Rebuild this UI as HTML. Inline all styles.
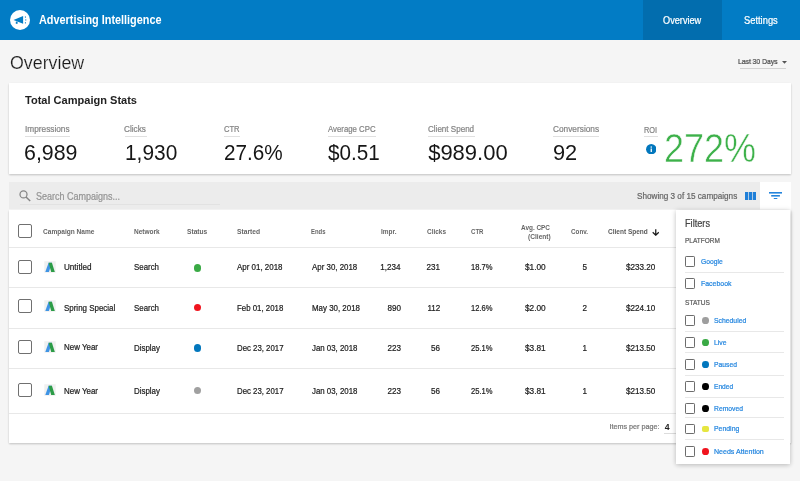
<!DOCTYPE html>
<html><head><meta charset="utf-8">
<style>
*{box-sizing:border-box;margin:0;padding:0}
html,body{width:800px;height:481px;overflow:hidden;background:#f5f5f5;font-family:"Liberation Sans",sans-serif;color:#212121}
.a{position:absolute;white-space:nowrap;line-height:1}
.cb{width:14px;height:13.6px;border:1.7px solid #707070;border-radius:2px;background:#fff}
.cbs{width:10.8px;height:10.6px;border:1.15px solid #6c6c6c;border-radius:1.2px;background:#fff}
.hl{height:1px;background:#e8e8e8}
</style></head><body><div id="w" style="position:absolute;left:0;top:0;width:800px;height:481px;will-change:transform;opacity:0.999">
<div class="a" style="left:0;top:0;width:800px;height:40px;background:#027cc5"></div>
<div class="a" style="left:643px;top:0;width:79px;height:40px;background:#026dae"></div>
<svg class="a" style="left:9.55px;top:10px" width="20" height="20" viewBox="0 0 20 20"><circle cx="10" cy="10" r="10" fill="#fff"/><path d="M3.5 10 L13.1 6.1 L13.1 13.8 Z" fill="#027cc5"/><rect x="5.8" y="11.6" width="1.8" height="2.2" fill="#027cc5"/><rect x="14.9" y="6.5" width="1.1" height="1.1" fill="#027cc5"/><rect x="15.2" y="9.4" width="1.1" height="1.1" fill="#027cc5"/><rect x="14.9" y="12.3" width="1.1" height="1.1" fill="#027cc5"/></svg>
<!-- last 30 days underline + arrow -->
<div class="a" style="left:740px;top:68px;width:46px;height:1px;background:#d2d2d2"></div>
<svg class="a" style="left:782.3px;top:61.3px" width="5" height="3" viewBox="0 0 5 3"><path d="M0 0 L5 0 L2.5 2.8 Z" fill="#555"/></svg>
<!-- stats card -->
<div class="a" style="left:9px;top:83px;width:781.5px;height:90.5px;background:#fff;box-shadow:0 1px 2px rgba(0,0,0,.22)"></div>
<div class="a" style="left:25.0px;top:136.3px;width:45px;border-top:1px solid #e0e0e0"></div>
<div class="a" style="left:124.5px;top:136.3px;width:22.25px;border-top:1px solid #e0e0e0"></div>
<div class="a" style="left:223.75px;top:136.3px;width:16px;border-top:1px solid #e0e0e0"></div>
<div class="a" style="left:328.25px;top:136.3px;width:48px;border-top:1px solid #e0e0e0"></div>
<div class="a" style="left:428.25px;top:136.3px;width:46.5px;border-top:1px solid #e0e0e0"></div>
<div class="a" style="left:552.75px;top:136.3px;width:46.5px;border-top:1px solid #e0e0e0"></div>
<div class="a" style="left:644.0px;top:136.3px;width:13.5px;border-top:1px solid #e0e0e0"></div>
<svg class="a" style="left:645.5px;top:143.8px" width="10.5" height="10.5" viewBox="0 0 10.5 10.5"><circle cx="5.25" cy="5.25" r="5.2" fill="#0277bd"/><rect x="4.6" y="4.5" width="1.3" height="3.5" fill="#fff"/><rect x="4.6" y="2.4" width="1.3" height="1.3" fill="#fff"/></svg>
<!-- search bar -->
<div class="a" style="left:9px;top:182.3px;width:751px;height:27.2px;background:#ececec"></div>
<div class="a" style="left:760px;top:182px;width:30.5px;height:27.5px;background:#fff"></div>
<svg class="a" style="left:19.2px;top:189.7px" width="12" height="12" viewBox="0 0 12 12"><circle cx="4.5" cy="4.4" r="3.5" fill="none" stroke="#858585" stroke-width="1.25"/><path d="M7 6.9 L11.2 11.1" stroke="#858585" stroke-width="1.45"/></svg>
<div class="a" style="left:20px;top:203.6px;width:200px;height:1px;background:#e2e2e2"></div>
<svg class="a" style="left:744.9px;top:191.8px" width="11.3" height="8.1" viewBox="0 0 11.3 8.1"><rect x="0" y="0" width="3.3" height="8.1" fill="#1f7fd8"/><rect x="4" y="0" width="3.3" height="8.1" fill="#1f7fd8"/><rect x="8" y="0" width="3.3" height="8.1" fill="#1f7fd8"/></svg>
<svg class="a" style="left:768.9px;top:191.8px" width="13.1" height="7.6" viewBox="0 0 13.1 7.6"><rect x="0" y="0" width="13.1" height="1.6" fill="#2384dc"/><rect x="2.2" y="3" width="8.7" height="1.6" fill="#2384dc"/><rect x="4.8" y="6" width="3.5" height="1.5" fill="#2384dc"/></svg>
<!-- table -->
<div class="a" style="left:9px;top:209.5px;width:781.5px;height:233.5px;background:#fff;box-shadow:0 1px 2px rgba(0,0,0,.22)"></div>
<div class="a hl" style="left:9px;top:246.7px;width:781px"></div>
<div class="a hl" style="left:9px;top:286.5px;width:781px"></div>
<div class="a hl" style="left:9px;top:327.9px;width:781px"></div>
<div class="a hl" style="left:9px;top:368px;width:781px"></div>
<div class="a hl" style="left:9px;top:412.9px;width:781px"></div>
<div class="a cb" style="left:18px;top:224.3px"></div>
<svg class="a" style="left:651.5px;top:228.8px" width="7.5" height="7" viewBox="0 0 7.5 7"><path d="M3.75 0.2 V6 M0.7 3.2 L3.75 6.2 L6.8 3.2" fill="none" stroke="#1a1a1a" stroke-width="1.25"/></svg>
<div class="a cb" style="left:18px;top:260.3px"></div>
<svg class="a" style="left:44px;top:261.1px" width="12" height="12" viewBox="0 0 12 12"><rect x="0.3" y="0.2" width="11.4" height="11.6" fill="#f0f0f0"/><path d="M4.6 1.7 L7.9 1.7 L4.9 11 L1.3 11 Z" fill="#3f94e4"/><path d="M4.6 1.7 L7.9 1.7 L10.8 11 L7.2 11 Z" fill="#2c9c47"/></svg>
<div class="a" style="left:193.9px;top:264.45px;width:7.3px;height:7.3px;border-radius:50%;background:#3aaa45"></div>
<div class="a cb" style="left:18px;top:299.2px"></div>
<svg class="a" style="left:44px;top:300.0px" width="12" height="12" viewBox="0 0 12 12"><rect x="0.3" y="0.2" width="11.4" height="11.6" fill="#f0f0f0"/><path d="M4.6 1.7 L7.9 1.7 L4.9 11 L1.3 11 Z" fill="#3f94e4"/><path d="M4.6 1.7 L7.9 1.7 L10.8 11 L7.2 11 Z" fill="#2c9c47"/></svg>
<div class="a" style="left:193.9px;top:303.55px;width:7.3px;height:7.3px;border-radius:50%;background:#f0141e"></div>
<div class="a cb" style="left:18px;top:340.3px"></div>
<svg class="a" style="left:44px;top:341.1px" width="12" height="12" viewBox="0 0 12 12"><rect x="0.3" y="0.2" width="11.4" height="11.6" fill="#f0f0f0"/><path d="M4.6 1.7 L7.9 1.7 L4.9 11 L1.3 11 Z" fill="#3f94e4"/><path d="M4.6 1.7 L7.9 1.7 L10.8 11 L7.2 11 Z" fill="#2c9c47"/></svg>
<div class="a" style="left:193.9px;top:344.45px;width:7.3px;height:7.3px;border-radius:50%;background:#0277bd"></div>
<div class="a cb" style="left:18px;top:383.4px"></div>
<svg class="a" style="left:44px;top:384.2px" width="12" height="12" viewBox="0 0 12 12"><rect x="0.3" y="0.2" width="11.4" height="11.6" fill="#f0f0f0"/><path d="M4.6 1.7 L7.9 1.7 L4.9 11 L1.3 11 Z" fill="#3f94e4"/><path d="M4.6 1.7 L7.9 1.7 L10.8 11 L7.2 11 Z" fill="#2c9c47"/></svg>
<div class="a" style="left:193.9px;top:386.75px;width:7.3px;height:7.3px;border-radius:50%;background:#a0a0a0"></div>
<div class="a" style="top:14.22px;font-size:12px;color:#fff;font-weight:bold;left:38.9px;transform:scaleX(0.9049);transform-origin:0 0;">Advertising Intelligence</div>
<div class="a" style="top:16.08px;font-size:10px;color:#fff;left:663px;transform:scaleX(0.9175);transform-origin:0 0;-webkit-text-stroke:0.22px #fff;">Overview</div>
<div class="a" style="top:16.08px;font-size:10px;color:#fff;left:744.25px;transform:scaleX(0.9339);transform-origin:0 0;-webkit-text-stroke:0.22px #fff;">Settings</div>
<div class="a" style="top:54.29px;font-size:18.9px;color:#1a1a1a;left:9.8px;transform:scaleX(0.9424);transform-origin:0 0;-webkit-text-stroke:0.2px #f5f5f5;">Overview</div>
<div class="a" style="top:58.34px;font-size:8px;color:#444;left:737.5px;transform:scaleX(0.8458);transform-origin:0 0;-webkit-text-stroke:0.22px #444;">Last 30 Days</div>
<div class="a" style="top:94.91px;font-size:11.4px;color:#222;font-weight:bold;left:24.8px;transform:scaleX(0.9688);transform-origin:0 0;">Total Campaign Stats</div>
<div class="a" style="top:125.05px;font-size:8.6px;color:#858585;left:24.9px;transform:scaleX(0.9627);transform-origin:0 0;-webkit-text-stroke:0.22px #858585;">Impressions</div>
<div class="a" style="top:125.05px;font-size:8.6px;color:#858585;left:124.4px;transform:scaleX(0.9532);transform-origin:0 0;-webkit-text-stroke:0.22px #858585;">Clicks</div>
<div class="a" style="top:125.05px;font-size:8.6px;color:#858585;left:223.65px;transform:scaleX(0.8828);transform-origin:0 0;-webkit-text-stroke:0.22px #858585;">CTR</div>
<div class="a" style="top:125.05px;font-size:8.6px;color:#858585;left:328.15px;transform:scaleX(0.9086);transform-origin:0 0;-webkit-text-stroke:0.22px #858585;">Average CPC</div>
<div class="a" style="top:125.05px;font-size:8.6px;color:#858585;left:428.15px;transform:scaleX(0.9366);transform-origin:0 0;-webkit-text-stroke:0.22px #858585;">Client Spend</div>
<div class="a" style="top:125.05px;font-size:8.6px;color:#858585;left:552.65px;transform:scaleX(0.9651);transform-origin:0 0;-webkit-text-stroke:0.22px #858585;">Conversions</div>
<div class="a" style="top:125.65px;font-size:8.6px;color:#858585;left:643.9px;transform:scaleX(0.8573);transform-origin:0 0;-webkit-text-stroke:0.22px #858585;">ROI</div>
<div class="a" style="top:141.90px;font-size:22px;color:#161616;left:24.4px;transform:scaleX(0.9716);transform-origin:0 0;">6,989</div>
<div class="a" style="top:141.90px;font-size:22px;color:#161616;left:125.15px;transform:scaleX(0.9489);transform-origin:0 0;">1,930</div>
<div class="a" style="top:141.90px;font-size:22px;color:#161616;left:223.65px;transform:scaleX(0.9416);transform-origin:0 0;">27.6%</div>
<div class="a" style="top:141.90px;font-size:22px;color:#161616;left:328.15px;transform:scaleX(0.9398);transform-origin:0 0;">$0.51</div>
<div class="a" style="top:141.90px;font-size:22px;color:#161616;left:428.15px;">$989.00</div>
<div class="a" style="top:141.90px;font-size:22px;color:#161616;left:553.15px;transform:scaleX(0.9904);transform-origin:0 0;">92</div>
<div class="a" style="top:127.92px;font-size:40px;color:#3db14a;left:663.8px;transform:scaleX(0.8992);transform-origin:0 0;-webkit-text-stroke:0.5px #fff;">272%</div>
<div class="a" style="top:191.68px;font-size:10px;color:#949494;left:36.1px;transform:scaleX(0.8994);transform-origin:0 0;-webkit-text-stroke:0.22px #949494;">Search Campaigns...</div>
<div class="a" style="top:192.10px;font-size:8.6px;color:#666;left:636.75px;transform:scaleX(0.9494);transform-origin:0 0;-webkit-text-stroke:0.22px #666;">Showing 3 of 15 campaigns</div>
<div class="a" style="top:227.98px;font-size:7.3px;color:#666;font-weight:bold;left:43px;transform:scaleX(0.9005);transform-origin:0 0;">Campaign Name</div>
<div class="a" style="top:227.98px;font-size:7.3px;color:#666;font-weight:bold;left:134.25px;transform:scaleX(0.8942);transform-origin:0 0;">Network</div>
<div class="a" style="top:227.98px;font-size:7.3px;color:#666;font-weight:bold;left:187px;transform:scaleX(0.9098);transform-origin:0 0;">Status</div>
<div class="a" style="top:227.98px;font-size:7.3px;color:#666;font-weight:bold;left:237px;transform:scaleX(0.9149);transform-origin:0 0;">Started</div>
<div class="a" style="top:227.98px;font-size:7.3px;color:#666;font-weight:bold;left:311.25px;transform:scaleX(0.8126);transform-origin:0 0;">Ends</div>
<div class="a" style="top:227.98px;font-size:7.3px;color:#666;font-weight:bold;left:381.25px;transform:scaleX(0.8889);transform-origin:0 0;">Impr.</div>
<div class="a" style="top:227.98px;font-size:7.3px;color:#666;font-weight:bold;left:426.75px;transform:scaleX(0.8837);transform-origin:0 0;">Clicks</div>
<div class="a" style="top:227.98px;font-size:7.3px;color:#666;font-weight:bold;left:470.5px;transform:scaleX(0.8333);transform-origin:0 0;">CTR</div>
<div class="a" style="top:227.98px;font-size:7.3px;color:#666;font-weight:bold;left:570.5px;transform:scaleX(0.8614);transform-origin:0 0;">Conv.</div>
<div class="a" style="top:224.48px;font-size:7.3px;color:#666;font-weight:bold;left:521.25px;transform:scaleX(0.8792);transform-origin:0 0;">Avg. CPC</div>
<div class="a" style="top:233.48px;font-size:7.3px;color:#666;font-weight:bold;left:527.5px;transform:scaleX(0.9049);transform-origin:0 0;">(Client)</div>
<div class="a" style="top:227.98px;font-size:7.3px;color:#5a5a5a;font-weight:bold;left:608.25px;transform:scaleX(0.8914);transform-origin:0 0;">Client Spend</div>
<div class="a" style="top:263.36px;font-size:9.0px;color:#212121;left:63.8px;transform:scaleX(0.9012);transform-origin:0 0;-webkit-text-stroke:0.22px #212121;">Untitled</div>
<div class="a" style="top:262.76px;font-size:9.0px;color:#212121;left:134px;transform:scaleX(0.8762);transform-origin:0 0;-webkit-text-stroke:0.22px #212121;">Search</div>
<div class="a" style="top:262.76px;font-size:9.0px;color:#212121;left:237px;transform:scaleX(0.8827);transform-origin:0 0;-webkit-text-stroke:0.22px #212121;">Apr 01, 2018</div>
<div class="a" style="top:262.76px;font-size:9.0px;color:#212121;left:311.5px;transform:scaleX(0.8778);transform-origin:0 0;-webkit-text-stroke:0.22px #212121;">Apr 30, 2018</div>
<div class="a" style="top:262.76px;font-size:9.0px;color:#212121;right:399.00px;transform:scaleX(0.9000);transform-origin:100% 0;-webkit-text-stroke:0.22px #212121;">1,234</div>
<div class="a" style="top:262.76px;font-size:9.0px;color:#212121;right:360.00px;transform:scaleX(0.9000);transform-origin:100% 0;-webkit-text-stroke:0.22px #212121;">231</div>
<div class="a" style="top:262.76px;font-size:9.0px;color:#212121;left:470.5px;transform:scaleX(0.8421);transform-origin:0 0;-webkit-text-stroke:0.22px #212121;">18.7%</div>
<div class="a" style="top:262.76px;font-size:9.0px;color:#212121;left:525px;transform:scaleX(0.9187);transform-origin:0 0;-webkit-text-stroke:0.22px #212121;">$1.00</div>
<div class="a" style="top:262.76px;font-size:9.0px;color:#212121;right:212.50px;transform:scaleX(0.9000);transform-origin:100% 0;-webkit-text-stroke:0.22px #212121;">5</div>
<div class="a" style="top:262.76px;font-size:9.0px;color:#212121;left:625.7px;transform:scaleX(0.9033);transform-origin:0 0;-webkit-text-stroke:0.22px #212121;">$233.20</div>
<div class="a" style="top:303.66px;font-size:9.0px;color:#212121;left:63.8px;transform:scaleX(0.8829);transform-origin:0 0;-webkit-text-stroke:0.22px #212121;">Spring Special</div>
<div class="a" style="top:303.56px;font-size:9.0px;color:#212121;left:134px;transform:scaleX(0.8762);transform-origin:0 0;-webkit-text-stroke:0.22px #212121;">Search</div>
<div class="a" style="top:303.56px;font-size:9.0px;color:#212121;left:237px;transform:scaleX(0.8719);transform-origin:0 0;-webkit-text-stroke:0.22px #212121;">Feb 01, 2018</div>
<div class="a" style="top:303.56px;font-size:9.0px;color:#212121;left:311.5px;transform:scaleX(0.8800);transform-origin:0 0;-webkit-text-stroke:0.22px #212121;">May 30, 2018</div>
<div class="a" style="top:303.56px;font-size:9.0px;color:#212121;right:399.00px;transform:scaleX(0.9000);transform-origin:100% 0;-webkit-text-stroke:0.22px #212121;">890</div>
<div class="a" style="top:303.56px;font-size:9.0px;color:#212121;right:360.00px;transform:scaleX(0.9000);transform-origin:100% 0;-webkit-text-stroke:0.22px #212121;">112</div>
<div class="a" style="top:303.56px;font-size:9.0px;color:#212121;left:470.5px;transform:scaleX(0.8421);transform-origin:0 0;-webkit-text-stroke:0.22px #212121;">12.6%</div>
<div class="a" style="top:303.56px;font-size:9.0px;color:#212121;left:525px;transform:scaleX(0.9187);transform-origin:0 0;-webkit-text-stroke:0.22px #212121;">$2.00</div>
<div class="a" style="top:303.56px;font-size:9.0px;color:#212121;right:212.50px;transform:scaleX(0.9000);transform-origin:100% 0;-webkit-text-stroke:0.22px #212121;">2</div>
<div class="a" style="top:303.56px;font-size:9.0px;color:#212121;left:625.7px;transform:scaleX(0.9033);transform-origin:0 0;-webkit-text-stroke:0.22px #212121;">$224.10</div>
<div class="a" style="top:343.26px;font-size:9.0px;color:#212121;left:63.8px;transform:scaleX(0.8824);transform-origin:0 0;-webkit-text-stroke:0.22px #212121;">New Year</div>
<div class="a" style="top:343.56px;font-size:9.0px;color:#212121;left:134px;transform:scaleX(0.8809);transform-origin:0 0;-webkit-text-stroke:0.22px #212121;">Display</div>
<div class="a" style="top:343.56px;font-size:9.0px;color:#212121;left:237px;transform:scaleX(0.8684);transform-origin:0 0;-webkit-text-stroke:0.22px #212121;">Dec 23, 2017</div>
<div class="a" style="top:343.56px;font-size:9.0px;color:#212121;left:311.5px;transform:scaleX(0.8742);transform-origin:0 0;-webkit-text-stroke:0.22px #212121;">Jan 03, 2018</div>
<div class="a" style="top:343.56px;font-size:9.0px;color:#212121;right:399.00px;transform:scaleX(0.9000);transform-origin:100% 0;-webkit-text-stroke:0.22px #212121;">223</div>
<div class="a" style="top:343.56px;font-size:9.0px;color:#212121;right:360.00px;transform:scaleX(0.9000);transform-origin:100% 0;-webkit-text-stroke:0.22px #212121;">56</div>
<div class="a" style="top:343.56px;font-size:9.0px;color:#212121;left:470.5px;transform:scaleX(0.8421);transform-origin:0 0;-webkit-text-stroke:0.22px #212121;">25.1%</div>
<div class="a" style="top:343.56px;font-size:9.0px;color:#212121;left:525px;transform:scaleX(0.9187);transform-origin:0 0;-webkit-text-stroke:0.22px #212121;">$3.81</div>
<div class="a" style="top:343.56px;font-size:9.0px;color:#212121;right:212.50px;transform:scaleX(0.9000);transform-origin:100% 0;-webkit-text-stroke:0.22px #212121;">1</div>
<div class="a" style="top:343.56px;font-size:9.0px;color:#212121;left:625.7px;transform:scaleX(0.9033);transform-origin:0 0;-webkit-text-stroke:0.22px #212121;">$213.50</div>
<div class="a" style="top:386.56px;font-size:9.0px;color:#212121;left:63.8px;transform:scaleX(0.8824);transform-origin:0 0;-webkit-text-stroke:0.22px #212121;">New Year</div>
<div class="a" style="top:387.36px;font-size:9.0px;color:#212121;left:134px;transform:scaleX(0.8809);transform-origin:0 0;-webkit-text-stroke:0.22px #212121;">Display</div>
<div class="a" style="top:387.36px;font-size:9.0px;color:#212121;left:237px;transform:scaleX(0.8684);transform-origin:0 0;-webkit-text-stroke:0.22px #212121;">Dec 23, 2017</div>
<div class="a" style="top:387.36px;font-size:9.0px;color:#212121;left:311.5px;transform:scaleX(0.8742);transform-origin:0 0;-webkit-text-stroke:0.22px #212121;">Jan 03, 2018</div>
<div class="a" style="top:387.36px;font-size:9.0px;color:#212121;right:399.00px;transform:scaleX(0.9000);transform-origin:100% 0;-webkit-text-stroke:0.22px #212121;">223</div>
<div class="a" style="top:387.36px;font-size:9.0px;color:#212121;right:360.00px;transform:scaleX(0.9000);transform-origin:100% 0;-webkit-text-stroke:0.22px #212121;">56</div>
<div class="a" style="top:387.36px;font-size:9.0px;color:#212121;left:470.5px;transform:scaleX(0.8421);transform-origin:0 0;-webkit-text-stroke:0.22px #212121;">25.1%</div>
<div class="a" style="top:387.36px;font-size:9.0px;color:#212121;left:525px;transform:scaleX(0.9187);transform-origin:0 0;-webkit-text-stroke:0.22px #212121;">$3.81</div>
<div class="a" style="top:387.36px;font-size:9.0px;color:#212121;right:212.50px;transform:scaleX(0.9000);transform-origin:100% 0;-webkit-text-stroke:0.22px #212121;">1</div>
<div class="a" style="top:387.36px;font-size:9.0px;color:#212121;left:625.7px;transform:scaleX(0.9033);transform-origin:0 0;-webkit-text-stroke:0.22px #212121;">$213.50</div>
<div class="a" style="top:423.03px;font-size:7.2px;color:#777;left:609.5px;-webkit-text-stroke:0.22px #777;">Items per page:</div>
<div class="a" style="top:422.81px;font-size:8.7px;color:#222;font-weight:bold;left:664.8px;">4</div>
<div class="a" style="left:664px;top:433px;width:14px;height:1px;background:#dcdcdc"></div>
<!-- filter panel -->
<div class="a" style="left:675.8px;top:210px;width:114.7px;height:254.3px;background:#fff;box-shadow:0 1px 5px rgba(0,0,0,.26)"></div>
<div class="a cbs" style="left:684.7px;top:256.2px"></div>
<div class="a hl" style="left:685px;top:272.0px;width:99px"></div>
<div class="a cbs" style="left:684.7px;top:278.2px"></div>
<div class="a cbs" style="left:684.7px;top:315.2px"></div>
<div class="a" style="left:702.2px;top:317.1px;width:6.7px;height:6.7px;border-radius:50%;background:#9e9e9e"></div>
<div class="a hl" style="left:685px;top:330.5px;width:99px"></div>
<div class="a cbs" style="left:684.7px;top:337.1px"></div>
<div class="a" style="left:702.2px;top:339.0px;width:6.7px;height:6.7px;border-radius:50%;background:#3aaa45"></div>
<div class="a hl" style="left:685px;top:352.2px;width:99px"></div>
<div class="a cbs" style="left:684.7px;top:359.0px"></div>
<div class="a" style="left:702.2px;top:360.9px;width:6.7px;height:6.7px;border-radius:50%;background:#0277bd"></div>
<div class="a hl" style="left:685px;top:374.5px;width:99px"></div>
<div class="a cbs" style="left:684.7px;top:381.3px"></div>
<div class="a" style="left:702.2px;top:383.2px;width:6.7px;height:6.7px;border-radius:50%;background:#000"></div>
<div class="a hl" style="left:685px;top:397.0px;width:99px"></div>
<div class="a cbs" style="left:684.7px;top:403.0px"></div>
<div class="a" style="left:702.2px;top:404.9px;width:6.7px;height:6.7px;border-radius:50%;background:#000"></div>
<div class="a hl" style="left:685px;top:417.0px;width:99px"></div>
<div class="a cbs" style="left:684.7px;top:423.7px"></div>
<div class="a" style="left:702.2px;top:425.6px;width:6.7px;height:6.7px;border-radius:2px;background:#e6e640"></div>
<div class="a hl" style="left:685px;top:439.2px;width:99px"></div>
<div class="a cbs" style="left:684.7px;top:446.0px"></div>
<div class="a" style="left:702.2px;top:447.9px;width:6.7px;height:6.7px;border-radius:50%;background:#f0141e"></div>
<div class="a" style="top:218.58px;font-size:10.2px;color:#444;left:685px;transform:scaleX(0.9014);transform-origin:0 0;-webkit-text-stroke:0.22px #444;">Filters</div>
<div class="a" style="top:237.38px;font-size:7.3px;color:#5c5c5c;left:685px;transform:scaleX(0.8928);transform-origin:0 0;-webkit-text-stroke:0.22px #5c5c5c;">PLATFORM</div>
<div class="a" style="top:298.58px;font-size:7.3px;color:#5c5c5c;left:684.7px;transform:scaleX(0.9024);transform-origin:0 0;-webkit-text-stroke:0.22px #5c5c5c;">STATUS</div>
<div class="a" style="top:257.79px;font-size:7.7px;color:#2486df;left:701.3px;transform:scaleX(0.8771);transform-origin:0 0;-webkit-text-stroke:0.22px #2486df;">Google</div>
<div class="a" style="top:279.79px;font-size:7.7px;color:#2486df;left:701.3px;transform:scaleX(0.9033);transform-origin:0 0;-webkit-text-stroke:0.22px #2486df;">Facebook</div>
<div class="a" style="top:316.79px;font-size:7.7px;color:#2486df;left:714.4px;transform:scaleX(0.8887);transform-origin:0 0;-webkit-text-stroke:0.22px #2486df;">Scheduled</div>
<div class="a" style="top:338.69px;font-size:7.7px;color:#2486df;left:714.4px;transform:scaleX(0.8859);transform-origin:0 0;-webkit-text-stroke:0.22px #2486df;">Live</div>
<div class="a" style="top:360.59px;font-size:7.7px;color:#2486df;left:714.4px;transform:scaleX(0.8820);transform-origin:0 0;-webkit-text-stroke:0.22px #2486df;">Paused</div>
<div class="a" style="top:382.89px;font-size:7.7px;color:#2486df;left:714.4px;transform:scaleX(0.8635);transform-origin:0 0;-webkit-text-stroke:0.22px #2486df;">Ended</div>
<div class="a" style="top:404.59px;font-size:7.7px;color:#2486df;left:714.4px;transform:scaleX(0.8813);transform-origin:0 0;-webkit-text-stroke:0.22px #2486df;">Removed</div>
<div class="a" style="top:425.29px;font-size:7.7px;color:#2486df;left:714.4px;transform:scaleX(0.8966);transform-origin:0 0;-webkit-text-stroke:0.22px #2486df;">Pending</div>
<div class="a" style="top:447.59px;font-size:7.7px;color:#2486df;left:714.4px;transform:scaleX(0.9174);transform-origin:0 0;-webkit-text-stroke:0.22px #2486df;">Needs Attention</div>
</div></body></html>
